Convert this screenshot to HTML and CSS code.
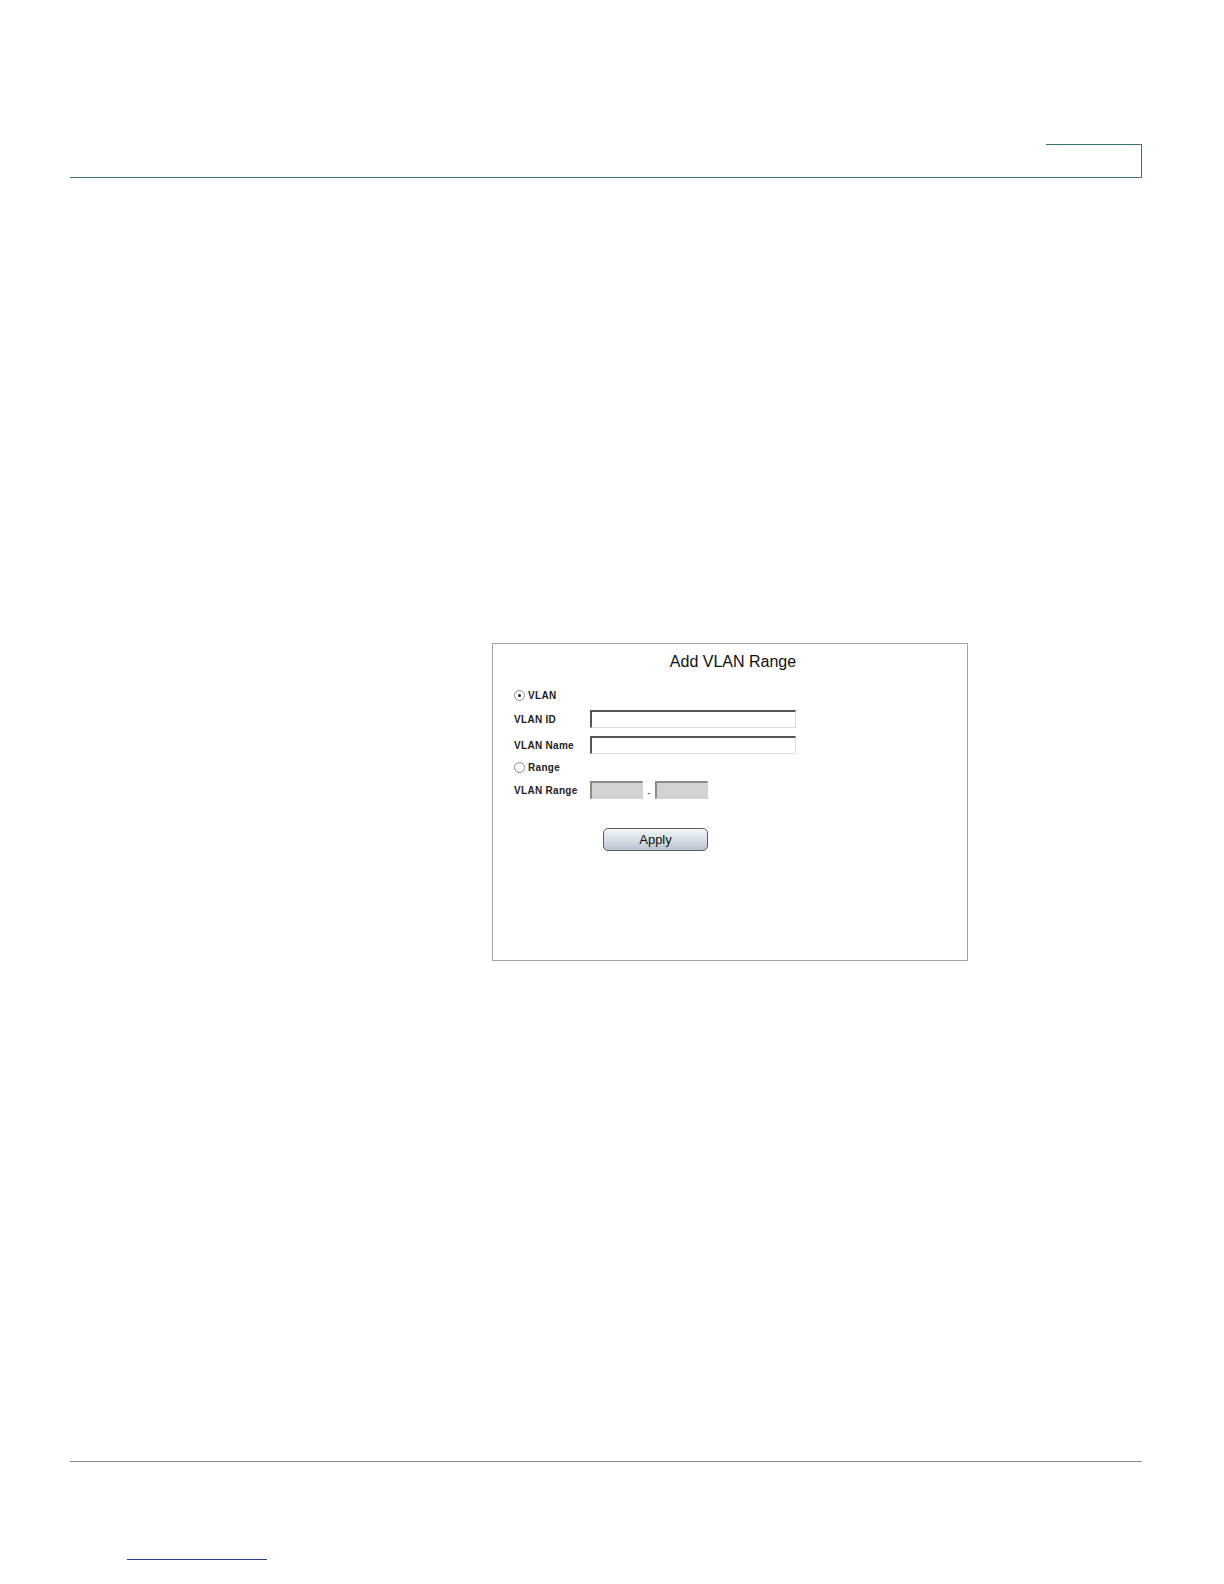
FILE: index.html
```html
<!DOCTYPE html>
<html>
<head>
<meta charset="utf-8">
<link rel="stylesheet" href="styles.css">
</head>
<body>
<div class="page">
  <header class="header">
    <div class="tab"></div>
  </header>
  <main class="content">
    <div class="dialog">
      <div class="title">Add VLAN Range</div>
      <div class="form">
        <div class="row radio-row">
          <span class="radio checked"></span><span class="lbl">VLAN</span>
        </div>
        <div class="row field-row">
          <span class="lbl label-col">VLAN ID</span>
          <span class="input wide"></span>
        </div>
        <div class="row field-row">
          <span class="lbl label-col">VLAN Name</span>
          <span class="input wide"></span>
        </div>
        <div class="row radio-row range-radio">
          <span class="radio"></span><span class="lbl">Range</span>
        </div>
        <div class="row field-row">
          <span class="lbl label-col">VLAN Range</span>
          <span class="input narrow disabled"></span>
          <span class="dash">-</span>
          <span class="input narrow disabled"></span>
        </div>
        <div class="btn-row">
          <span class="btn">Apply</span>
        </div>
      </div>
    </div>
  </main>
  <footer class="footer">
    <div class="link-line"></div>
  </footer>
</div>
</body>
</html>
```
FILE: styles.css
```css
html, body {
  margin: 0;
  padding: 0;
  background: #ffffff;
  font-family: "Liberation Sans", Arial, sans-serif;
}
.page {
  width: 1224px;
  height: 1584px;
  display: flex;
  flex-direction: column;
}
.header {
  margin: 144px 0 0 70px;
  width: 1072px;
  height: 34px;
  border-bottom: 1px solid #3a7480;
  display: flex;
  justify-content: flex-end;
  box-sizing: border-box;
}
.tab {
  width: 96px;
  height: 34px;
  border-top: 1px solid #3a7480;
  border-right: 1px solid #3a7480;
  box-sizing: border-box;
}
.content {
  height: 1283px;
  display: flex;
  flex-direction: column;
  padding-top: 465px;
  padding-left: 492px;
  box-sizing: border-box;
}
.dialog {
  width: 476px;
  height: 318px;
  border: 1px solid #a3a3a3;
  box-sizing: border-box;
}
.title {
  text-align: center;
  font-size: 16px;
  color: #111;
  padding-top: 8px;
  height: 19px;
  line-height: 19px;
  padding-left: 6px;
}
.form {
  padding-left: 21px;
  padding-top: 17px;
}
.row {
  display: flex;
  align-items: center;
}
.lbl {
  font-family: "Liberation Sans", Arial, sans-serif;
  font-size: 10px;
  font-weight: bold;
  letter-spacing: 0.3px;
  color: #222;
}
.radio-row {
  height: 15px;
  gap: 3px;
}
.radio {
  width: 9px;
  height: 9px;
  border: 1px solid #8a8a8a;
  border-radius: 50%;
  position: relative;
  background: #fff;
  box-sizing: content-box;
}
.radio.checked::after {
  content: "";
  position: absolute;
  left: 3px;
  top: 3px;
  width: 3px;
  height: 3px;
  border-radius: 50%;
  background: #222;
}
.field-row {
  height: 18px;
  margin-top: 8px;
}
.radio-row + .field-row { margin-top: 7px; }
.field-row + .radio-row { margin-top: 6px; }
.range-radio + .field-row { margin-top: 6px; }
.label-col {
  width: 76px;
}
.input {
  height: 18px;
  box-sizing: border-box;
  border-top: 2px solid #555;
  border-left: 2px solid #555;
  border-right: 1px solid #ddd;
  border-bottom: 1px solid #ddd;
  background: #fff;
}
.wide { width: 206px; }
.narrow { width: 53px; }
.disabled {
  background: #d2d2d2;
  border-top: 2px solid #8a8a8a;
  border-left: 2px solid #8a8a8a;
  border-right: 1px solid #d2d2d2;
  border-bottom: 1px solid #d2d2d2;
}
.dash {
  width: 12px;
  text-align: center;
  font-size: 10px;
  color: #555;
  padding-top: 4px;
}
.btn-row {
  padding-top: 29px;
  padding-left: 89px;
}
.btn {
  display: inline-block;
  width: 105px;
  height: 23px;
  box-sizing: border-box;
  border: 1px solid #555d66;
  border-radius: 5px;
  background: linear-gradient(#f2f5f8 0%, #d7dfe7 50%, #b7c4d0 100%);
  text-align: center;
  font-family: "Liberation Sans", Arial, sans-serif;
  font-size: 13px;
  line-height: 21px;
  color: #111;
}
.footer {
  margin-left: 70px;
  width: 1072px;
  border-top: 1px solid #8a8a8a;
  flex: 1;
  box-sizing: border-box;
}
.link-line {
  margin-top: 97px;
  margin-left: 57px;
  width: 140px;
  height: 1px;
  background: #2a3f8a;
}
```
